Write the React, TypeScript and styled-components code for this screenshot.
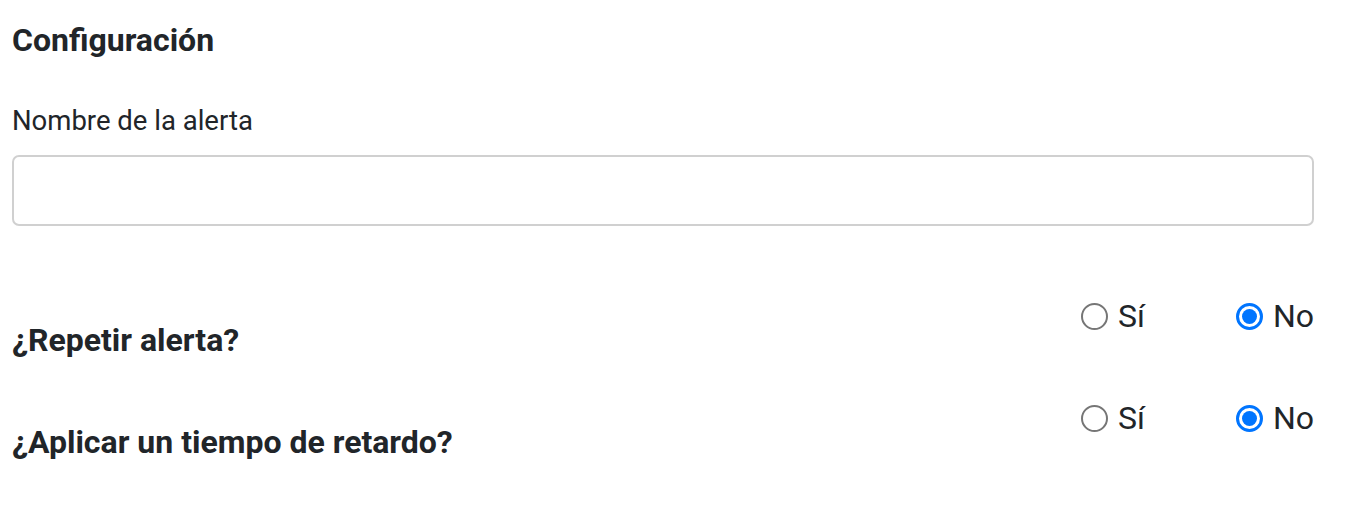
import React from "react";
import styled, { createGlobalStyle } from "styled-components";

const GlobalStyle = createGlobalStyle`
  html, body {
    margin: 0;
    padding: 0;
    background: #ffffff;
  }
  body {
    font-family: Roboto, "Liberation Sans", Arial, sans-serif;
    color: #212529;
  }
  * { box-sizing: border-box; }
`;

const Page = styled.div`
  width: 1352px;
  padding: 21px 38px 40px 12px;
`;

const Heading = styled.h5`
  margin: 0;
  font-size: 32px;
  font-weight: 700;
  line-height: 38px;
`;

const FieldLabel = styled.label`
  display: block;
  margin-top: 44px;
  font-size: 27.5px;
  line-height: 36px;
  font-weight: 400;
  color: #212529;
`;

const TextInput = styled.input`
  display: block;
  width: 100%;
  height: 71px;
  margin-top: 16px;
  border: 2px solid #d0d0d0;
  border-radius: 7px;
  background: #fff;
  font-family: inherit;
  font-size: 26px;
  padding: 0 20px;
  outline: none;
`;

const Questions = styled.div`
  display: flex;
  flex-direction: column;
  gap: 40px;
  margin-top: 71px;
`;

const Row = styled.div`
  display: flex;
  justify-content: space-between;
  align-items: flex-start;
`;

const Question = styled.div`
  margin-top: 24px;
  font-size: 32px;
  font-weight: 700;
  line-height: 38px;
`;

const RadioGroup = styled.div`
  display: flex;
  gap: 91px;
`;

const Option = styled.label`
  display: flex;
  align-items: center;
  gap: 10px;
  font-size: 32px;
  line-height: 38px;
  cursor: pointer;
`;

const RadioInput = styled.input.attrs({ type: "radio" })`
  appearance: none;
  -webkit-appearance: none;
  margin: 0;
  width: 27px;
  height: 27px;
  border-radius: 50%;
  border: 2px solid #767676;
  background: #fff;
  display: grid;
  place-content: center;
  &:checked {
    border: 3px solid #0075ff;
  }
  &:checked::before {
    content: "";
    width: 15px;
    height: 15px;
    border-radius: 50%;
    background: #0075ff;
  }
`;

type YesNoProps = { name: string; question: string; value: "si" | "no" };

function YesNoRow({ name, question, value }: YesNoProps) {
  return (
    <Row>
      <Question>{question}</Question>
      <RadioGroup>
        <Option>
          <RadioInput name={name} defaultChecked={value === "si"} />
          Sí
        </Option>
        <Option>
          <RadioInput name={name} defaultChecked={value === "no"} />
          No
        </Option>
      </RadioGroup>
    </Row>
  );
}

export default function App() {
  return (
    <>
      <GlobalStyle />
      <Page>
        <Heading>Configuración</Heading>
        <FieldLabel htmlFor="alert-name">Nombre de la alerta</FieldLabel>
        <TextInput id="alert-name" type="text" />
        <Questions>
          <YesNoRow name="repeat" question="¿Repetir alerta?" value="no" />
          <YesNoRow name="delay" question="¿Aplicar un tiempo de retardo?" value="no" />
        </Questions>
      </Page>
    </>
  );
}
